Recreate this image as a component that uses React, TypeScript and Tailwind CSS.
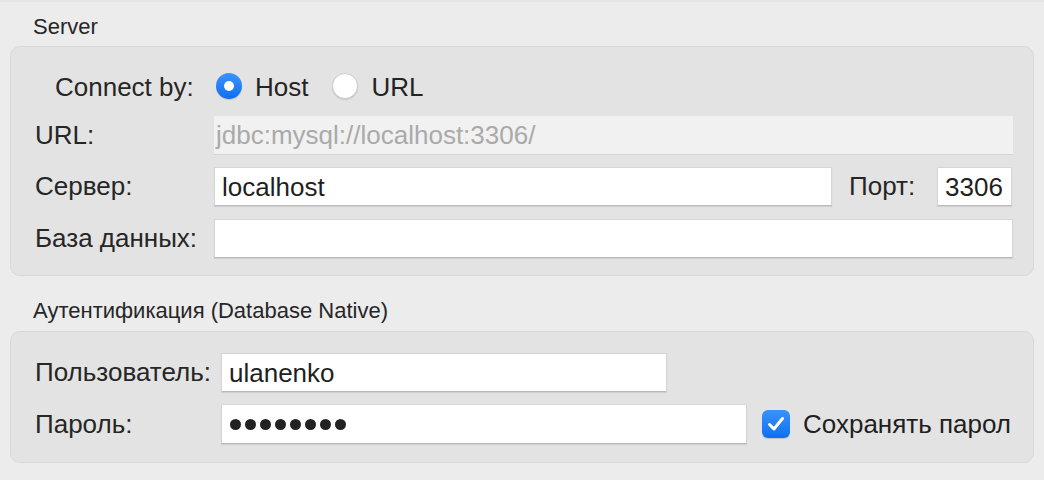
import React from "react";

const font = { fontFamily: '"Liberation Sans", Arial, sans-serif' };

function Field({ value, className = "" }: { value?: string; className?: string }) {
  return (
    <div
      className={`h-[39px] bg-white border border-[#d6d6d6] border-b-[#b9b9b9] shadow-[0_1px_1px_rgba(0,0,0,0.08)] flex items-center pl-[7px] text-[26px] text-[#1f1f1f] leading-none overflow-hidden whitespace-nowrap ${className}`}
    >
      {value}
    </div>
  );
}

function Radio({ checked, label }: { checked: boolean; label: string }) {
  return (
    <div className="flex items-center gap-[13px]">
      {checked ? (
        <div className="w-[26px] h-[26px] rounded-full bg-gradient-to-b from-[#3b93fb] to-[#0b6ff0] flex items-center justify-center shadow-[0_1px_1px_rgba(0,0,0,0.15)]">
          <div className="w-[10px] h-[10px] rounded-full bg-white" />
        </div>
      ) : (
        <div className="w-[26px] h-[26px] rounded-full bg-white border border-[#cdcdcd] shadow-[0_1px_1px_rgba(0,0,0,0.12)]" />
      )}
      <span className="text-[26px] text-[#232323] pt-[3px]">{label}</span>
    </div>
  );
}

export default function App() {
  return (
    <div
      className="w-[1044px] h-[480px] bg-[#ececec] overflow-hidden px-[10px] border-t-2 border-[#e4e4e4]"
      style={font}
    >
      {/* Server */}
      <div className="h-[44px] pt-[12px] pl-[23px] text-[22px] leading-[26px] text-[#262626]">Server</div>
      <div className="h-[230px] rounded-[10px] border border-[#d9d9d9] bg-[#e3e3e3] pt-[19px] pl-[24px] pr-[20px] text-[#262626]">
        <div className="h-[40px] flex items-center">
          <div className="w-[181px] pl-[20px] pt-[3px] text-[26px]">Connect by:</div>
          <div className="flex items-center gap-[24px]">
            <Radio checked label="Host" />
            <Radio checked={false} label="URL" />
          </div>
        </div>
        <div className="mt-[10px] h-[39px] flex items-center">
          <div className="w-[179px] text-[26px]">URL:</div>
          <div className="flex-1 h-[39px] bg-[#f1f1f1] border-b border-[#d4d4d4] flex items-center pl-[2px] text-[26px] text-[#aaaaaa] whitespace-nowrap">
            jdbc:mysql://localhost:3306/
          </div>
        </div>
        <div className="mt-[12px] h-[39px] flex items-center">
          <div className="w-[179px] text-[26px]">Сервер:</div>
          <Field value="localhost" className="w-[618px]" />
          <div className="ml-[17px] w-[88px] text-[26px]">Порт:</div>
          <Field value="3306" className="w-[75px]" />
        </div>
        <div className="mt-[13px] h-[39px] flex items-center">
          <div className="w-[179px] text-[26px]">База данных:</div>
          <Field className="flex-1" />
        </div>
      </div>

      {/* Auth */}
      <div className="h-[55px] pt-[22px] pl-[23px] text-[22px] leading-[26px] text-[#262626]">
        Аутентификация (Database Native)
      </div>
      <div className="h-[132px] rounded-[10px] border border-[#d9d9d9] bg-[#e3e3e3] pt-[21px] pl-[24px] text-[#262626]">
        <div className="h-[39px] flex items-center">
          <div className="w-[186px] text-[26px]">Пользователь:</div>
          <Field value="ulanenko" className="w-[446px]" />
        </div>
        <div className="mt-[12px] h-[40px] flex items-center">
          <div className="w-[186px] text-[26px]">Пароль:</div>
          <div className="w-[526px] h-[40px] bg-white border border-[#d6d6d6] border-b-[#b9b9b9] shadow-[0_1px_1px_rgba(0,0,0,0.08)] flex items-center pl-[8px] gap-[4px]">
            {[0, 1, 2, 3, 4, 5, 6, 7].map((i) => (
              <span key={i} className="w-[11px] h-[11px] rounded-full bg-[#222]" />
            ))}
          </div>
          <div className="ml-[15px] flex items-center gap-[13px] whitespace-nowrap">
            <div className="w-[28px] h-[28px] shrink-0 rounded-[6px] bg-gradient-to-b from-[#3a92fb] to-[#0b6ff0] flex items-center justify-center shadow-[0_1px_1px_rgba(0,0,0,0.15)]">
              <svg width="18" height="16" viewBox="0 0 18 16" fill="none">
                <path d="M2.5 8.5 L7 13 L15.5 2.5" stroke="white" strokeWidth="3" strokeLinecap="round" strokeLinejoin="round" />
              </svg>
            </div>
            <span className="text-[26px] text-[#1f1f1f]">Сохранять парол</span>
          </div>
        </div>
      </div>
    </div>
  );
}
